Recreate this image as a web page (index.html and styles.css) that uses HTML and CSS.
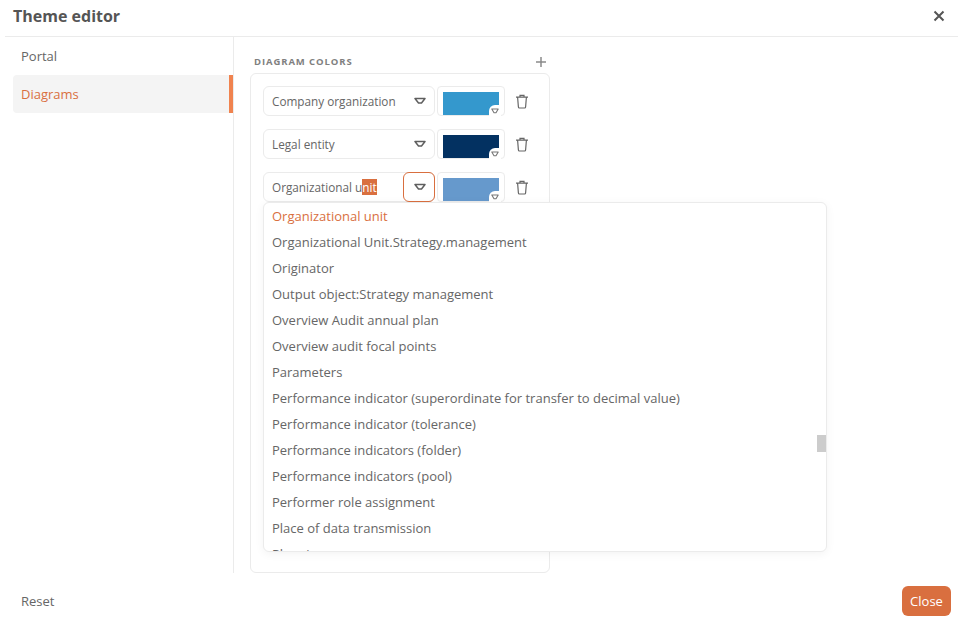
FILE: index.html
```html
<!DOCTYPE html>
<html lang="en">
<head>
<meta charset="utf-8">
<title>Theme editor</title>
<link rel="stylesheet" href="styles.css">
</head>
<body>
<div class="dialog">
  <header class="head">
    <h1 class="title">Theme editor</h1>
    <svg class="x" width="12" height="12" viewBox="0 0 12 12"><path d="M1.500 1.500l9 9M10.500 1.500l-9 9" fill="none" stroke="#555" stroke-width="2"/></svg>
  </header>
  <div class="body">
    <nav class="side">
      <div class="nav">Portal</div>
      <div class="nav active">Diagrams</div>
    </nav>
    <main class="main">
      <div class="section-head">
        <span class="section-title">DIAGRAM COLORS</span>
        <svg class="plus" width="12" height="12" viewBox="0 0 12 12"><path d="M6 1v10M1 6h10" fill="none" stroke="#8a8a8a" stroke-width="1.500"/></svg>
      </div>
      <div class="panel">
        <div class="row">
          <div class="combo"><span class="val">Company organization</span><span class="arrow"><svg width="12" height="8" viewBox="0 0 12 8"><path d="M1 1.500h10L7.500 6h-3z" fill="none" stroke="#5f5f5f" stroke-width="1.500" stroke-linejoin="round"/></svg></span></div>
          <div class="color"><div class="fill c1"><span class="badge"><svg width="8" height="6" viewBox="0 0 8 6"><path d="M.8 1h6.400L5 4.800H3z" fill="none" stroke="#777" stroke-width="1.100" stroke-linejoin="round"/></svg></span></div></div>
          <svg class="trash" width="14" height="15" viewBox="0 0 14 15"><path d="M1 3.200h12M5 3V1.300h4V3M2.600 3.200l.8 9.800q.1 1 1 1h5.200q.9 0 1-1l.8-9.800" fill="none" stroke="#666" stroke-width="1.200"/></svg>
        </div>
        <div class="row">
          <div class="combo"><span class="val">Legal entity</span><span class="arrow"><svg width="12" height="8" viewBox="0 0 12 8"><path d="M1 1.500h10L7.500 6h-3z" fill="none" stroke="#5f5f5f" stroke-width="1.500" stroke-linejoin="round"/></svg></span></div>
          <div class="color"><div class="fill c2"><span class="badge"><svg width="8" height="6" viewBox="0 0 8 6"><path d="M.8 1h6.400L5 4.800H3z" fill="none" stroke="#777" stroke-width="1.100" stroke-linejoin="round"/></svg></span></div></div>
          <svg class="trash" width="14" height="15" viewBox="0 0 14 15"><path d="M1 3.200h12M5 3V1.300h4V3M2.600 3.200l.8 9.800q.1 1 1 1h5.200q.9 0 1-1l.8-9.800" fill="none" stroke="#666" stroke-width="1.200"/></svg>
        </div>
        <div class="row">
          <div class="combo"><span class="val">Organizational u<span class="sel">nit</span></span><span class="arrow focus"><svg width="12" height="8" viewBox="0 0 12 8"><path d="M1 1.500h10L7.500 6h-3z" fill="none" stroke="#5f5f5f" stroke-width="1.500" stroke-linejoin="round"/></svg></span></div>
          <div class="color"><div class="fill c3"><span class="badge"><svg width="8" height="6" viewBox="0 0 8 6"><path d="M.8 1h6.400L5 4.800H3z" fill="none" stroke="#777" stroke-width="1.100" stroke-linejoin="round"/></svg></span></div></div>
          <svg class="trash" width="14" height="15" viewBox="0 0 14 15"><path d="M1 3.200h12M5 3V1.300h4V3M2.600 3.200l.8 9.800q.1 1 1 1h5.200q.9 0 1-1l.8-9.800" fill="none" stroke="#666" stroke-width="1.200"/></svg>
        </div>
        <ul class="menu">
          <li class="current">Organizational unit</li>
          <li>Organizational Unit.Strategy.management</li>
          <li>Originator</li>
          <li>Output object:Strategy management</li>
          <li>Overview Audit annual plan</li>
          <li>Overview audit focal points</li>
          <li>Parameters</li>
          <li>Performance indicator (superordinate for transfer to decimal value)</li>
          <li>Performance indicator (tolerance)</li>
          <li>Performance indicators (folder)</li>
          <li>Performance indicators (pool)</li>
          <li>Performer role assignment</li>
          <li>Place of data transmission</li>
          <li>Planning</li>
          <li class="thumb"></li>
        </ul>
      </div>
    </main>
  </div>
  <footer class="foot">
    <span class="reset">Reset</span>
    <button class="close">Close</button>
  </footer>
</div>
</body>
</html>
```
FILE: styles.css
```css
* { box-sizing: border-box; }
html, body { margin: 0; height: 100%; background: #fff; overflow: hidden; }
body { font-family: "Open Sans", sans-serif; font-size: 13px; color: #666; }
.dialog { display: flex; flex-direction: column; width: 963px; height: 625px; padding: 0 5px; }
.head { height: 37px; flex: none; display: flex; align-items: center; justify-content: space-between; padding: 0 13px 4px 8px; border-bottom: 1px solid #ebebeb; }
.title { margin: 0; font-size: 16px; font-weight: 700; color: #555; line-height: 22px; }
.body { flex: none; height: 536px; display: flex; }
.side { width: 229px; flex: none; border-right: 1px solid #ebebeb; padding: 0 0 0 8px; }
.nav { height: 38px; line-height: 38px; padding-left: 8px; font-size: 13px; color: #666; }
.active { background: #f4f4f4; color: #d96f3f; border-right: 4px solid #f0834f; border-radius: 4px 0 0 4px; }
.main { flex: 1; padding: 17px 0 0 16px; }
.section-head { width: 300px; height: 19px; display: flex; align-items: center; justify-content: space-between; padding: 0 3px 4px 4px; }
.section-title { font-size: 9.500px; font-weight: 700; letter-spacing: .9px; color: #808080; }
.panel { position: relative; width: 300px; height: 500px; border: 1px solid #ebebeb; border-radius: 6px; padding: 12px; display: flex; flex-direction: column; gap: 13px; }
.row { display: flex; align-items: center; height: 30px; }
.combo { width: 172px; height: 30px; border: 1px solid #ebebeb; border-radius: 6px; display: flex; align-items: center; justify-content: space-between; }
.val { padding-left: 8px; font-size: 11.750px; color: #666; white-space: nowrap; }
.sel { background: #d96f3f; color: #fff; }
.arrow { width: 32px; height: 30px; margin-right: -1px; padding-left: 1px; flex: none; display: flex; align-items: center; justify-content: center; border-radius: 6px; }
.focus { border: 1px solid #d96f3f; }
.color { width: 68px; height: 30px; margin-left: 2px; border: 1px solid #ebebeb; border-radius: 4px; padding: 5px 5px 0; flex: none; }
.fill { position: relative; height: 23px; }
.c1 { background: #3498cd; }
.c2 { background: #033161; }
.c3 { background: #6699cc; }
.badge { position: absolute; right: -2px; bottom: -2px; width: 12px; height: 12px; background: #fff; border-radius: 6px 0 0 0; display: flex; align-items: center; justify-content: center; }
.trash { margin-left: 10px; flex: none; }
.menu { position: absolute; left: 12px; top: 128px; width: 564px; height: 350px; margin: 0; padding: 0; list-style: none; background: #fff; border: 1px solid #ebebeb; border-radius: 6px; box-shadow: 0 2px 10px rgba(0,0,0,.05); overflow: hidden; }
.menu li { height: 26px; line-height: 26px; padding-left: 8px; font-size: 13px; color: #666; white-space: nowrap; }
.menu .current { color: #d96f3f; }
.menu .thumb { position: absolute; right: 0; top: 232px; width: 9px; height: 17px; padding: 0; background: #ccc; }
.foot { flex: 1; display: flex; align-items: center; justify-content: space-between; padding: 4px 7px 0 16px; }
.reset { font-size: 13px; color: #666; }
.close { width: 49px; height: 30px; padding: 0; border: 0; border-radius: 6px; background: #d96f3f; color: #fff; font: 13px "Open Sans", sans-serif; }
```
